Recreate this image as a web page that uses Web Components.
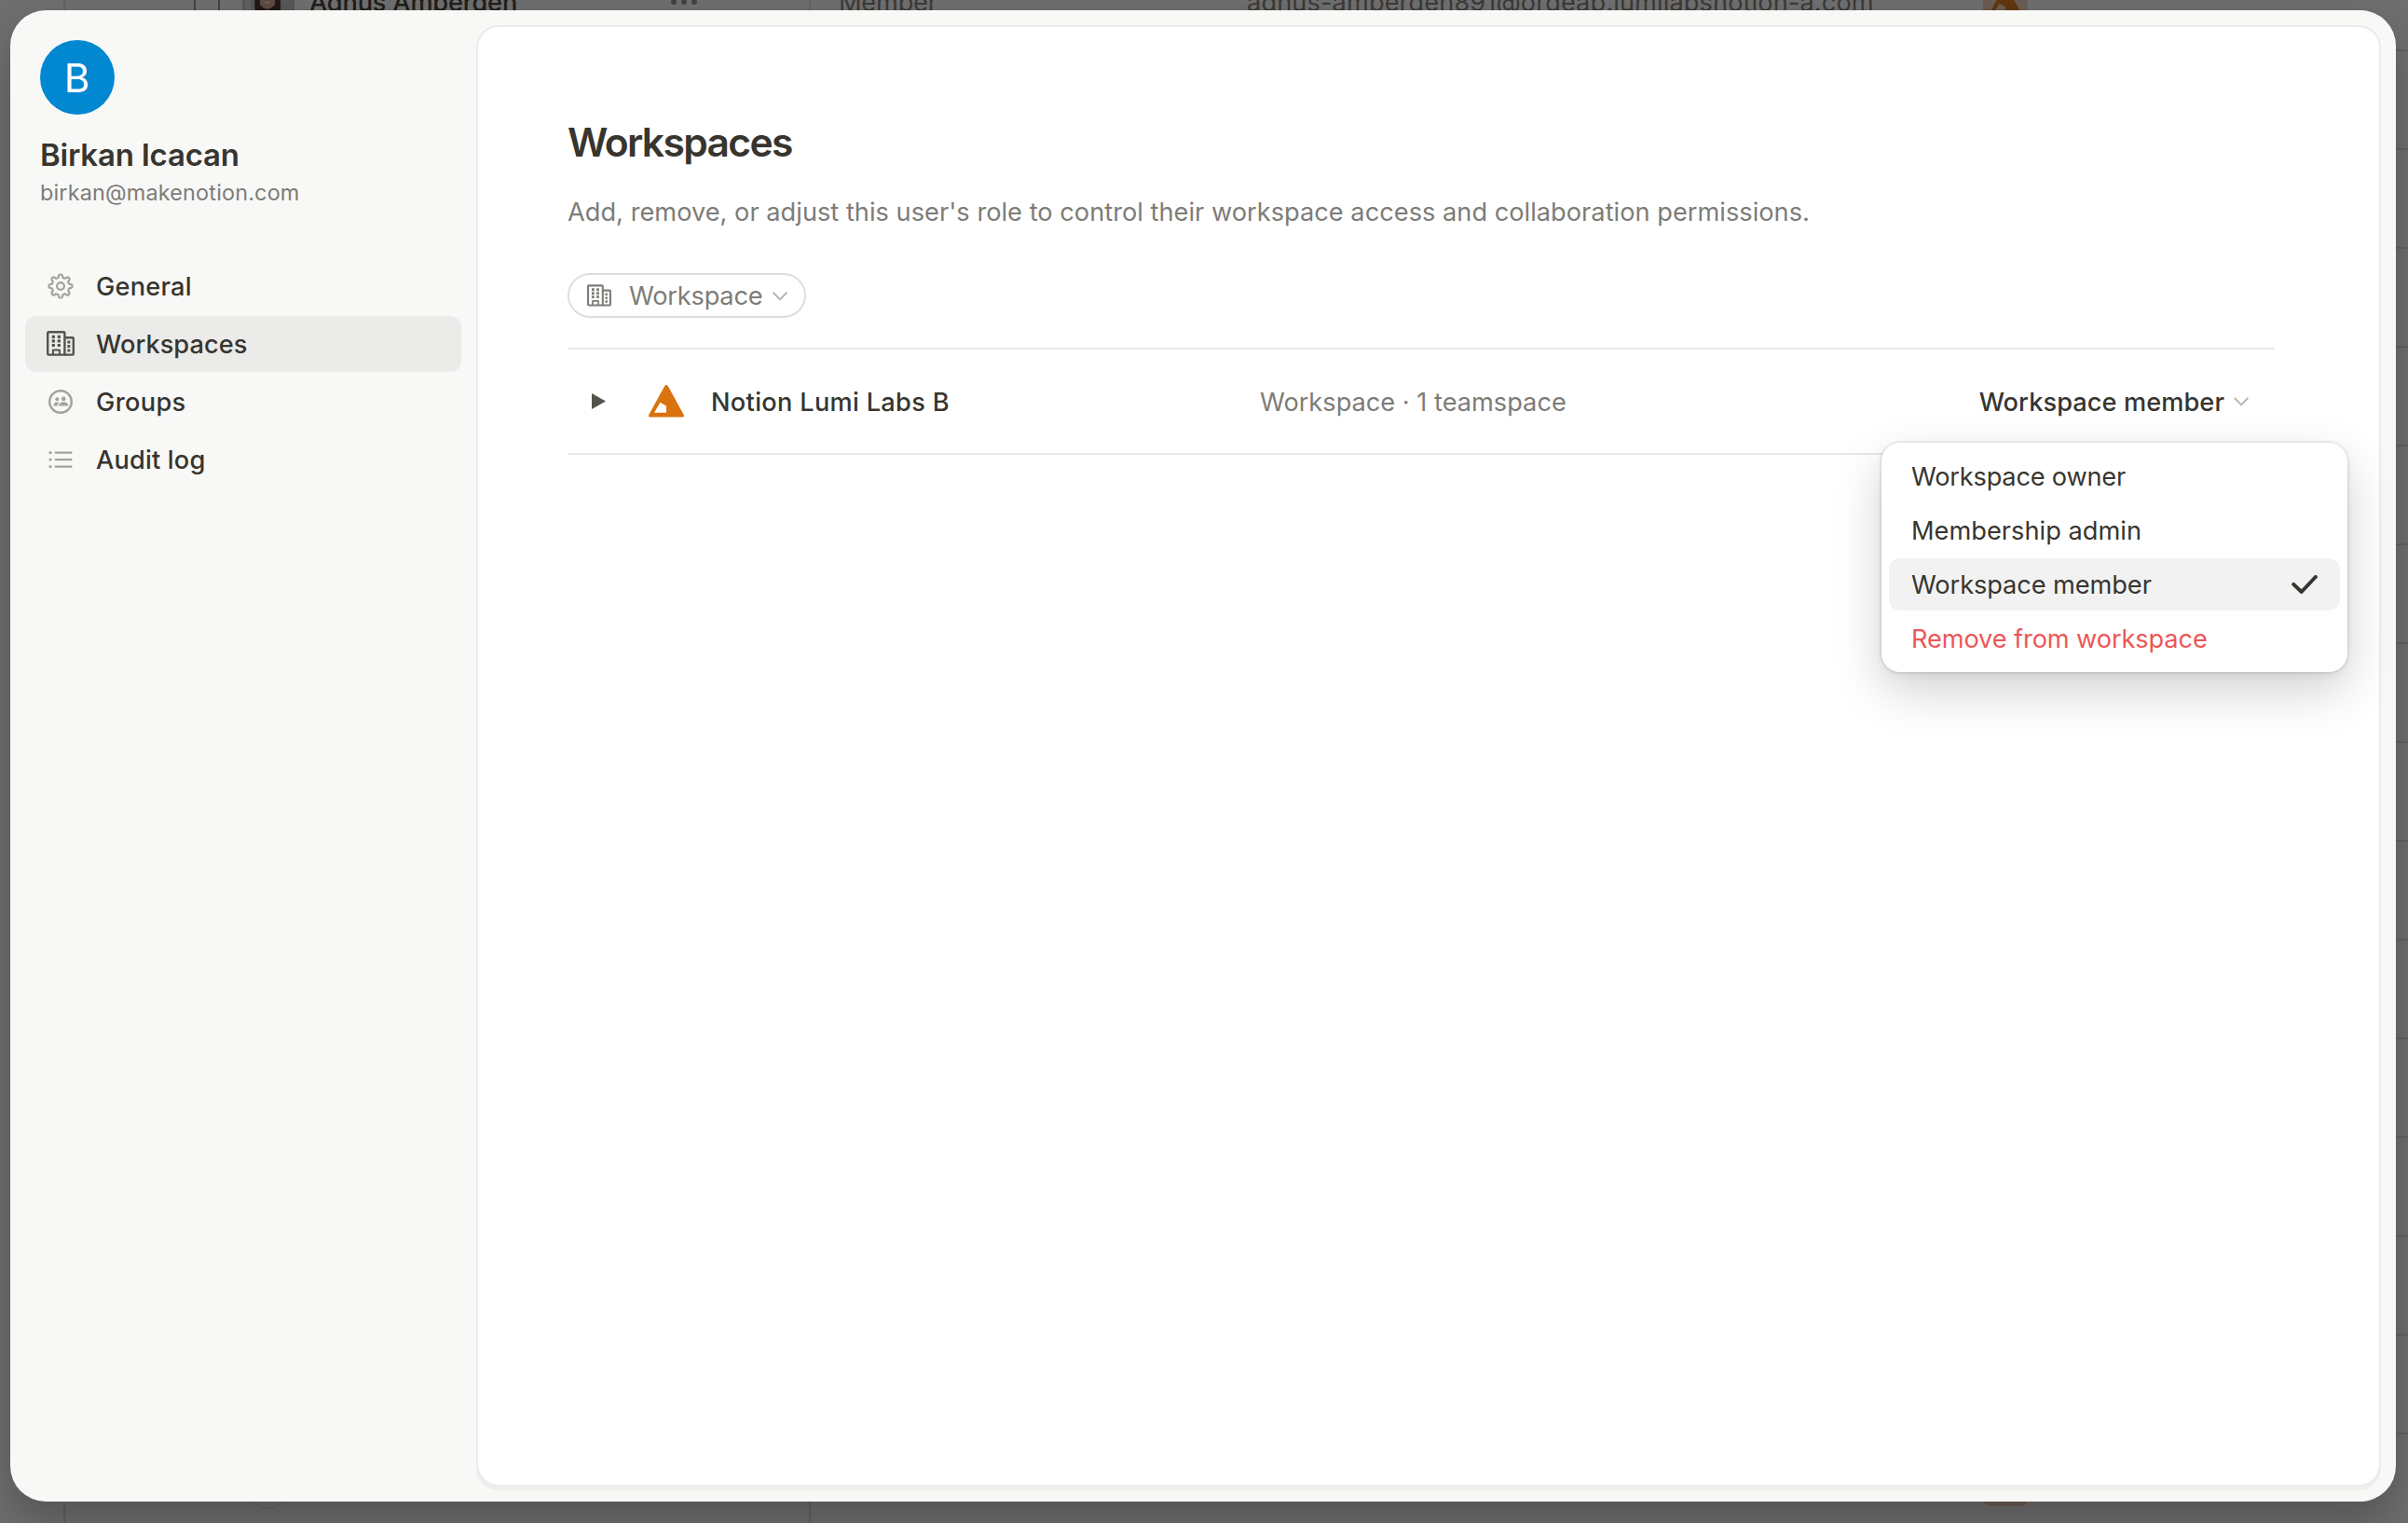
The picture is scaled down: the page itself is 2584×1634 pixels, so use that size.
<!DOCTYPE html>
<html lang="en">
<head>
<meta charset="utf-8">
<title>Workspaces</title>
<style>
html, body { margin: 0; height: 100%; overflow: hidden; background: #fff; }
body { font-family: Inter, "Liberation Sans", sans-serif; font-size: 27.2px; color: #37352f; position: relative; }
</style>
</head>
<body>
<member-table></member-table>
<settings-modal>
  <user-card slot="side" initial="B">
    <span slot="name">Birkan Icacan</span>
    <span slot="email">birkan@makenotion.com</span>
  </user-card>
  <nav-item slot="side" icon="gear" style="letter-spacing:.22px">General</nav-item>
  <nav-item slot="side" icon="building" active style="letter-spacing:.05px">Workspaces</nav-item>
  <nav-item slot="side" icon="people" style="letter-spacing:.34px">Groups</nav-item>
  <nav-item slot="side" icon="list" style="letter-spacing:.17px">Audit log</nav-item>

  <page-heading>
    <span slot="title">Workspaces</span>
    <span slot="text">Add, remove, or adjust this user's role to control their workspace access and collaboration permissions.</span>
  </page-heading>
  <filter-pill>Workspace</filter-pill>
  <workspace-row>
    <span slot="name">Notion Lumi Labs B</span>
    <span slot="info">Workspace · 1 teamspace</span>
    <span slot="role">Workspace member</span>
  </workspace-row>

  <role-menu slot="overlay">
    <menu-option style="letter-spacing:-.2px">Workspace owner</menu-option>
    <menu-option style="letter-spacing:.02px">Membership admin</menu-option>
    <menu-option selected style="letter-spacing:-.08px">Workspace member</menu-option>
    <menu-option danger style="letter-spacing:-.11px">Remove from workspace</menu-option>
  </role-menu>
</settings-modal>

<script>
function define(name, render) {
  customElements.define(name, class extends HTMLElement {
    connectedCallback() {
      if (this.shadowRoot) return;
      this.attachShadow({ mode: 'open' }).innerHTML = render(this);
    }
  });
}

// Eight-toothed cog outline around (15, 15)
function cog() {
  const at = (r, deg) => {
    const a = (deg - 90) * Math.PI / 180;
    return (15 + r * Math.cos(a)).toFixed(2) + ' ' + (15 + r * Math.sin(a)).toFixed(2);
  };
  let d = 'M' + at(9.8, -13);
  for (let k = 0; k < 8; k++) {
    const c = k * 45;
    d += 'L' + at(11.4, c - 10) + 'Q' + at(12.5, c - 8) + ' ' + at(12.5, c - 3) +
         'L' + at(12.5, c + 3) + 'Q' + at(12.5, c + 8) + ' ' + at(11.4, c + 10) +
         'L' + at(9.8, c + 13) + 'Q' + at(8.8, c + 22.5) + ' ' + at(9.8, c + 32);
  }
  return d + 'Z';
}

const ICONS = {
  gear: ['0 0 30 30', `<g fill="none" stroke="currentColor" stroke-width="2.2" stroke-linejoin="round"><path d="${cog()}"/><circle cx="15" cy="15" r="3.9"/></g>`],
  building: ['0 0 30 27', `<g fill="none" stroke="currentColor" stroke-width="2.4" stroke-linejoin="round"><path d="M1.2 2.2a1 1 0 0 1 1-1h16.2a1 1 0 0 1 1 1v23.4H2.2a1 1 0 0 1-1-1z"/><path d="M19.4 7.3h8.4a1 1 0 0 1 1 1v16.3a1 1 0 0 1-1 1h-8.4"/><path stroke-width="2" d="M6.9 25v-4.6h7v4.6"/></g><g fill="currentColor"><path d="M5.7 4.7h3.2v3.2H5.7zM11.7 4.7h3.2v3.2h-3.2zM5.7 9.3h3.2v3.2H5.7zM11.7 9.3h3.2v3.2h-3.2zM5.7 13.9h3.2v3.2H5.7zM11.7 13.9h3.2v3.2h-3.2zM22.4 10.6h2.9v2.9h-2.9zM22.4 15.1h2.9v2.9h-2.9zM22.4 19.6h2.9v2.9h-2.9z"/></g>`],
  people: ['0 0 30 30', `<circle cx="15" cy="15" r="11.8" fill="none" stroke="currentColor" stroke-width="2.4"/><g fill="currentColor"><circle cx="11.3" cy="12.3" r="2"/><circle cx="18.2" cy="11.9" r="2.3"/><path d="M13.8 19.6c-.5 0-.8-.4-.7-1 .4-2 2.4-3.3 5.1-3.3s4.7 1.3 5.1 3.3c.1.6-.2 1-.7 1zM8.200 19.600c-.5 0-.8-.3-.7-.9.3-1.9 1.8-3.1 3.9-3.1.8 0 1.4.1 2 .4-1.100.8-1.800 2-1.900 3.600z"/></g>`],
  list: ['0 0 30 30', `<g stroke="currentColor" stroke-width="2.2" stroke-linecap="round"><path d="M9.700 7.600h16.800M9.700 15.100h16.800M9.700 22.600h16.800"/></g><g fill="currentColor"><circle cx="4" cy="7.6" r="1.6"/><circle cx="4" cy="15.1" r="1.6"/><circle cx="4" cy="22.6" r="1.6"/></g>`],
  chevron: ['0 0 16 10', `<path d="M1.2 1.4 8 8.4l6.800-7" fill="none" stroke="currentColor" stroke-width="2" stroke-linecap="round" stroke-linejoin="round"/>`],
  play: ['0 0 15 17', `<path d="M0 0v17l15-8.500z" fill="currentColor"/>`],
  tent: ['0 0 38 35', `<path fill="#d9730d" fill-rule="evenodd" d="M17.300 1.100c.8-1.400 2.600-1.400 3.400 0l17 30.800c.8 1.400 0 2.600-1.500 2.600H1.800c-1.500 0-2.300-1.200-1.500-2.600zM12.400 18.700 6.100 29.800H19v-7.300z"/>`],
  check: ['0 0 28 21', `<path d="M2.200 9.900 10.700 18 25.800 2" fill="none" stroke="currentColor" stroke-width="4" stroke-linecap="round" stroke-linejoin="round"/>`]
};

define('ui-icon', el => {
  const [box, art] = ICONS[el.getAttribute('name')];
  return `<style>:host{display:block;flex:none}svg{display:block;width:100%;height:100%}</style><svg viewBox="${box}">${art}</svg>`;
});

define('member-table', () => `
<style>
:host { display: block; position: absolute; inset: 0; overflow: hidden; background: #fff; }
.rows { display: flex; flex-direction: column; margin-top: -51px; }
.row { display: flex; height: 104px; border-bottom: 2px solid #e3e2e0; flex: none; margin-left: 68px; }
.user { width: 798px; display: flex; align-items: center; border: solid #e3e2e0; border-width: 0 2px; padding-top: 2px; height: 102px; }
.box { width: 24px; height: 24px; border: 2px solid #8f8e8b; margin-left: 138px; }
.face { width: 56px; height: 56px; margin-left: 24px; display: block; }
.name { margin-left: 16px; font-weight: 500; letter-spacing: -.2px; width: 388px; white-space: nowrap; }
.dots { display: flex; gap: 5px; }
.dots i { width: 6px; height: 6px; border-radius: 50%; background: #91918e; }
.cell { display: flex; align-items: center; padding-top: 2px; height: 102px; color: #7d7a75; white-space: nowrap; }
.role { width: 438px; padding-left: 30px; letter-spacing: -.2px; }
.mail { width: 790px; letter-spacing: .11px; }
.tile { width: 48px; height: 48px; border-radius: 8px; background: #f5cfb6; display: flex; align-items: center; justify-content: center; }
.tile ui-icon { width: 38px; height: 35px; }
.ring { width: 50px; height: 50px; border: 2px solid #efeeec; border-radius: 50%; margin-left: 191px; }
.shade { position: absolute; inset: 0; background: rgba(15,15,15,.6); }
</style>
<div class="rows">
  <div class="row">
    <div class="user"><span class="box"></span>
      <svg class="face" viewBox="0 0 56 56"><rect width="56" height="56" rx="8" fill="#c3c3c4"/><path fill="#d9dde2" d="M3 0h6v56H3z"/><path fill="#3b2a24" d="M14 42C11 12 17 2 27 2s15 10 14 40z"/><path fill="#d7a48c" d="M19 14h16v17q-8 9-16 0z"/><path fill="#fff" d="M24 28q3 3 6 0z"/><path fill="#5a6270" d="M20 56V38q7-4 12 0v18z"/></svg>
      <span class="name">Agnus Amberden</span><span class="dots"><i></i><i></i><i></i></span></div>
    <div class="cell role">Member</div>
    <div class="cell mail">agnus-amberden891@ordeab.lumilabsnotion-a.com</div>
    <div class="cell"><span class="tile"><ui-icon name="tent"></ui-icon></span></div>
  </div>
  ${'<div class="row"></div>'.repeat(14)}
  <div class="row">
    <div class="user"><span class="ring"></span></div>
    <div class="cell role"></div><div class="cell mail"></div>
    <div class="cell"><span class="tile"></span></div>
  </div>
</div>
<div class="shade"></div>`);

define('settings-modal', () => `
<style>
:host { position: absolute; left: 11px; top: 11px; width: 2560px; height: 1600px; display: flex; box-sizing: border-box;
  background: #f8f8f7; border-radius: 38px; box-shadow: 0 24px 48px rgba(0,0,0,.24); }
aside { width: 502px; box-sizing: border-box; padding: 32px 18px 0 16px; display: flex; flex-direction: column; gap: 2px; flex: none; }
main { flex: 1; margin: 18px 18px 18px 0; box-sizing: border-box; padding: 98px 112px 0 96px; background: #fff; border-radius: 22px;
  box-shadow: 0 0 0 2px #ebebea, 0 4px 0 2px #eeeeec; }
</style>
<aside><slot name="side"></slot></aside>
<main><slot></slot></main>
<slot name="overlay"></slot>`);

define('user-card', el => `
<style>
:host { display: flex; flex-direction: column; padding: 0 16px; margin-bottom: 53px; }
.avatar { width: 80px; height: 80px; border-radius: 50%; background: #0288d1; color: #fff; font-size: 42px; line-height: 81px; text-align: center; text-indent: -1px; }
.name { margin-top: 23px; font-size: 33px; line-height: 40px; font-weight: 600; letter-spacing: -.22px; }
.email { margin-top: 5px; font-size: 23.4px; line-height: 31px; color: #7d7c78; letter-spacing: .18px; }
</style>
<div class="avatar">${el.getAttribute('initial')}</div>
<div class="name"><slot name="name"></slot></div>
<div class="email"><slot name="email"></slot></div>`);

define('nav-item', el => {
  const icon = el.getAttribute('icon');
  return `
<style>
:host { display: flex; align-items: center; height: 60px; padding-left: 23px; gap: 23px; border-radius: 12px; font-weight: 500; }
:host([active]) { background: #ebebea; }
ui-icon { width: 30px; height: 30px; color: #a3a29f; }
ui-icon[name=building] { height: 27px; color: #54534b; margin-top: -1px; }
</style>
<ui-icon name="${icon}"></ui-icon><span><slot></slot></span>`;
});

define('page-heading', () => `
<style>
:host { display: block; }
.title { font-size: 42.6px; line-height: 52px; font-weight: 600; letter-spacing: -1.65px; }
.text { margin-top: 29px; line-height: 40px; color: #7d7c78; letter-spacing: .02px; white-space: nowrap; }
</style>
<div class="title"><slot name="title"></slot></div>
<div class="text"><slot name="text"></slot></div>`);

define('filter-pill', () => `
<style>
:host { display: flex; align-items: center; box-sizing: border-box; width: 256px; height: 48px; margin: 45px 0 32px; padding: 0 18px 0 19px;
  border: 2px solid #dededc; border-radius: 24px; color: #7d7c78; }
.b { width: 26px; height: 24px; }
span { flex: 1; margin-left: 19px; letter-spacing: -.2px; }
.c { width: 16px; height: 10px; color: #b4b4b1; margin-top: 2px; }
</style>
<ui-icon class="b" name="building"></ui-icon><span><slot></slot></span><ui-icon class="c" name="chevron"></ui-icon>`);

define('workspace-row', () => `
<style>
:host { display: flex; align-items: center; height: 111px; border: solid #e9e9e7; border-width: 2px 0; padding-left: 26px; padding-right: 28px; white-space: nowrap; }
.p { width: 15px; height: 17px; color: #54534b; }
.t { width: 38px; height: 35px; margin-left: 46px; margin-top: -1px; }
span { padding-top: 1px; }
.name { width: 591px; padding-left: 29px; box-sizing: border-box; font-weight: 500; letter-spacing: .3px; }
.info { flex: 1; margin-left: 27px; color: #7d7c78; }
.role { font-weight: 500; letter-spacing: .08px; }
.c { width: 16px; height: 10px; color: #b4b4b1; margin-left: 10px; }
</style>
<ui-icon class="p" name="play"></ui-icon><ui-icon class="t" name="tent"></ui-icon>
<span class="name"><slot name="name"></slot></span>
<span class="info"><slot name="info"></slot></span>
<span class="role"><slot name="role"></slot></span><ui-icon class="c" name="chevron"></ui-icon>`);

define('role-menu', () => `
<style>
:host { position: absolute; left: 2008px; top: 464px; width: 500px; height: 246px; box-sizing: border-box; padding: 8px; background: #fff;
  border-radius: 20px; display: flex; flex-direction: column; gap: 2px;
  box-shadow: 0 0 0 2px rgba(0,0,0,.06), 0 4px 10px rgba(0,0,0,.06), 0 20px 52px rgba(0,0,0,.18); }
</style><slot></slot>`);

define('menu-option', el => `
<style>
:host { display: flex; align-items: center; justify-content: space-between; height: 56px; padding: 0 24px; border-radius: 12px; }
:host([selected]) { background: #f2f2f2; }
:host([danger]) { color: #eb5757; }
ui-icon { width: 28px; height: 21px; }
</style>
<span><slot></slot></span>${el.hasAttribute('selected') ? '<ui-icon name="check"></ui-icon>' : ''}`);
</script>
</body>
</html>
